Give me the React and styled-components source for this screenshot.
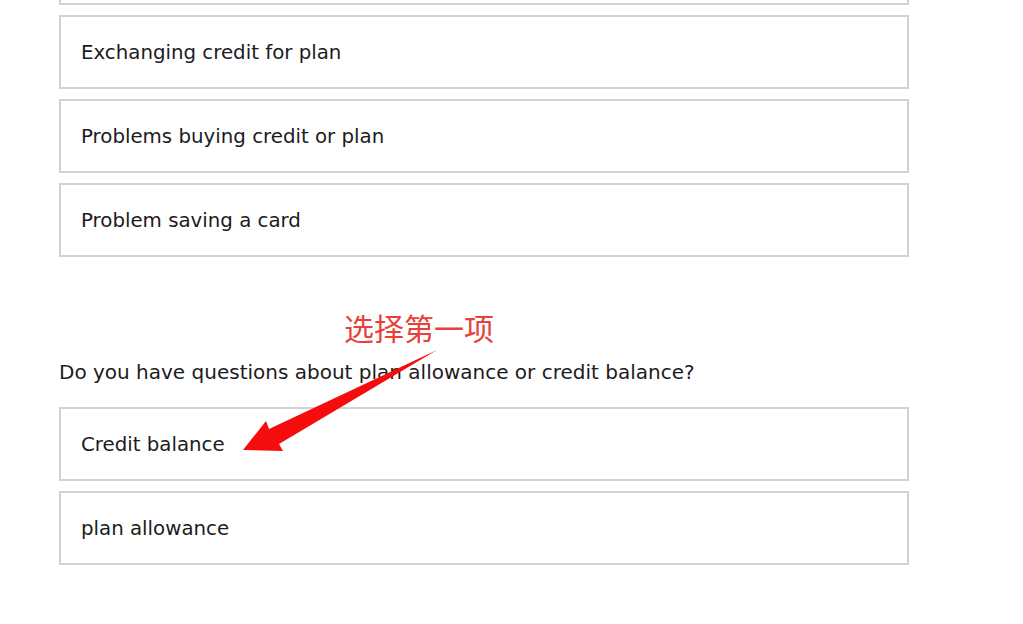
import React, { Fragment } from 'react';
import styled, { createGlobalStyle } from 'styled-components';

const GlobalStyle = createGlobalStyle`
  body {
    margin: 0;
    background: #fff;
    font-family: "DejaVu Sans", "Noto Sans", sans-serif;
    color: #1c1b22;
  }
`;

const Page = styled.div`
  position: relative;
  width: 1023px;
  height: 624px;
  overflow: hidden;
  padding-left: 59px;
  box-sizing: border-box;
`;

const List = styled.div`
  display: flex;
  flex-direction: column;
  gap: 10px;
  width: 850px;
  margin-top: ${(p) => p.top || 0}px;
`;

const Option = styled.div`
  box-sizing: border-box;
  height: 74px;
  border: 2px solid #d2d2d2;
  display: flex;
  align-items: center;
  padding-left: 20px;
  font-size: 19.8px;
`;

const Question = styled.p`
  margin: 103px 0 23px;
  font-size: 20px;
  line-height: 24px;
`;

const Note = styled.div`
  position: absolute;
  left: 344px;
  top: 307px;
  color: #e8403a;
  font-family: "Noto Sans CJK SC", sans-serif;
  font-size: 30px;
  line-height: 40px;
`;

// red pointer from the note down to the first answer
const Arrow = styled.svg`
  position: absolute;
  left: 0;
  top: 0;
  pointer-events: none;
`;

const billing = [
  '',
  'Exchanging credit for plan',
  'Problems buying credit or plan',
  'Problem saving a card',
];

const balance = ['Credit balance', 'plan allowance'];

export default function App() {
  return (
    <Fragment>
      <GlobalStyle />
      <Page>
        <List top={-69}>
          {billing.map((t, i) => (
            <Option key={i}>{t}</Option>
          ))}
        </List>
        <Question>Do you have questions about plan allowance or credit balance?</Question>
        <List>
          {balance.map((t) => (
            <Option key={t}>{t}</Option>
          ))}
        </List>
        <Note>选择第一项</Note>
        <Arrow width="1023" height="624">
          <polygon
            points="243,450 266,421 269,429 437,350 279,444 283,451"
            fill="#f50c0c"
          />
        </Arrow>
      </Page>
    </Fragment>
  );
}
